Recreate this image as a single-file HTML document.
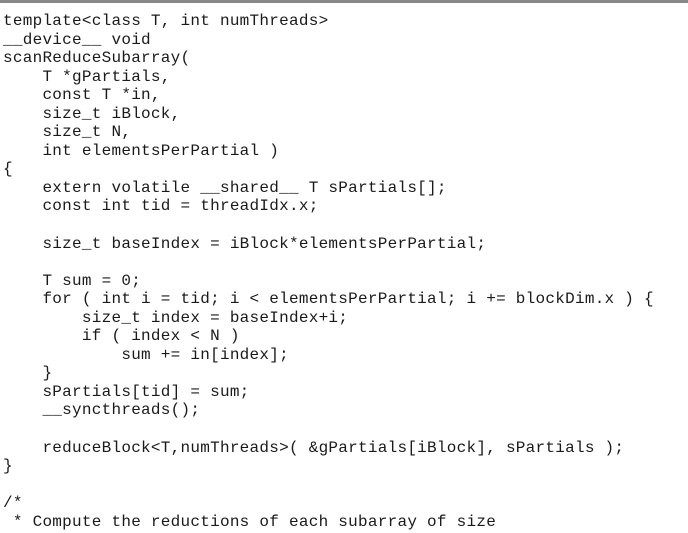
<!DOCTYPE html>
<html><head><meta charset="utf-8"><style>
html,body{margin:0;padding:0;background:#fff;width:688px;height:533px;overflow:hidden}
.bar{position:absolute;left:0;top:0;width:688px;height:3px;background:#888}
pre{position:absolute;left:3px;top:12px;margin:0;font-family:"Liberation Mono",monospace;font-size:16px;letter-spacing:0.26px;line-height:18.55px;color:#1a1a1a}
</style></head><body>
<div class="bar"></div>
<pre>template&lt;class T, int numThreads&gt;
__device__ void
scanReduceSubarray(
    T *gPartials,
    const T *in,
    size_t iBlock,
    size_t N,
    int elementsPerPartial )
{
    extern volatile __shared__ T sPartials[];
    const int tid = threadIdx.x;

    size_t baseIndex = iBlock*elementsPerPartial;

    T sum = 0;
    for ( int i = tid; i &lt; elementsPerPartial; i += blockDim.x ) {
        size_t index = baseIndex+i;
        if ( index &lt; N )
            sum += in[index];
    }
    sPartials[tid] = sum;
    __syncthreads();

    reduceBlock&lt;T,numThreads&gt;( &amp;gPartials[iBlock], sPartials );
}

/*
 * Compute the reductions of each subarray of size</pre>
</body></html>
